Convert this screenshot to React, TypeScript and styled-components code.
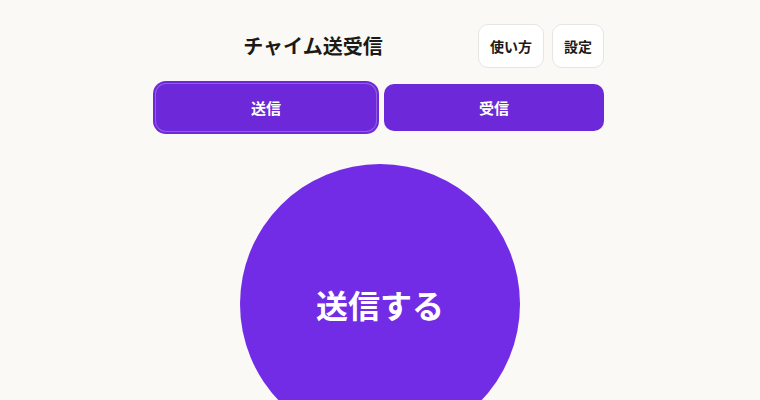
import React, { useState } from 'react';
import styled, { createGlobalStyle } from 'styled-components';

const GlobalStyle = createGlobalStyle`
  html, body {
    margin: 0;
    padding: 0;
    background: #faf9f6;
  }
  body {
    font-family: "Noto Sans CJK JP", "Noto Sans", sans-serif;
    color: #1c1917;
  }
`;

const Page = styled.main`
  width: 448px;
  margin: 0 auto;
  padding-top: 24px;
  display: flex;
  flex-direction: column;
`;

const Header = styled.header`
  display: flex;
  align-items: center;
  gap: 8px;
  height: 44px;
`;

const Title = styled.h1`
  flex: 1;
  margin: 0;
  text-align: center;
  font-size: 20px;
  font-weight: 700;
  line-height: 1;
  color: #1c1917;
`;

const HeaderButton = styled.button`
  height: 44px;
  padding: 0 11px;
  border: 1px solid #e7e5e4;
  border-radius: 10px;
  background: #ffffff;
  font-family: inherit;
  font-size: 14px;
  font-weight: 700;
  color: #1c1917;
  cursor: pointer;
`;

const Tabs = styled.nav`
  display: grid;
  grid-template-columns: 1fr 1fr;
  gap: 8px;
  margin-top: 16px;
`;

const Tab = styled.button<{ $active: boolean }>`
  height: 47px;
  border: none;
  border-radius: 10px;
  background: #6d28d9;
  color: #ffffff;
  font-family: inherit;
  font-size: 15px;
  font-weight: 700;
  cursor: pointer;
  box-shadow: ${({ $active }) =>
    $active ? '0 0 0 1px rgba(255, 255, 255, 0.25), 0 0 0 3px #6d28d9' : 'none'};
`;

const Stage = styled.section`
  display: flex;
  justify-content: center;
  margin-top: 33px;
`;

const SendButton = styled.button`
  width: 280px;
  height: 280px;
  flex-shrink: 0;
  border: none;
  border-radius: 50%;
  background: #722ce6;
  color: #ffffff;
  font-family: inherit;
  font-size: 32px;
  font-weight: 700;
  cursor: pointer;
`;

export default function App() {
  const [mode, setMode] = useState<'send' | 'receive'>('send');

  return (
    <>
      <GlobalStyle />
      <Page>
        <Header>
          <Title>チャイム送受信</Title>
          <HeaderButton>使い方</HeaderButton>
          <HeaderButton>設定</HeaderButton>
        </Header>
        <Tabs>
          <Tab $active={mode === 'send'} onClick={() => setMode('send')}>送信</Tab>
          <Tab $active={mode === 'receive'} onClick={() => setMode('receive')}>受信</Tab>
        </Tabs>
        <Stage>
          <SendButton>{mode === 'send' ? '送信する' : '受信する'}</SendButton>
        </Stage>
      </Page>
    </>
  );
}
